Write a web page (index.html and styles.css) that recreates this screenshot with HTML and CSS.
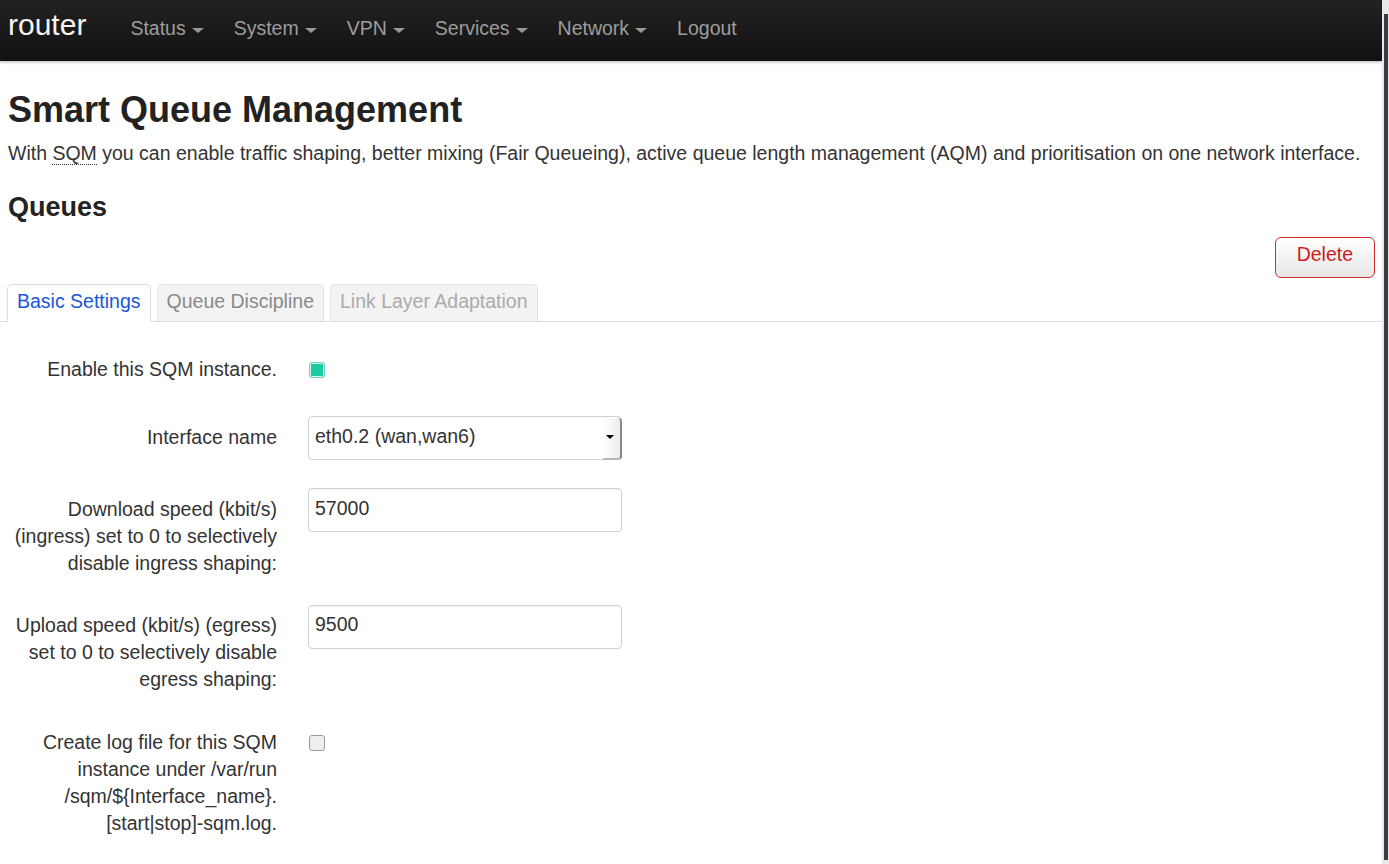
FILE: index.html
```html
<!DOCTYPE html>
<html lang="en">
<head>
<meta charset="utf-8">
<title>Smart Queue Management - router</title>
<link rel="stylesheet" href="styles.css">
</head>
<body>
<header class="navbar">
  <a class="brand" href="#">router</a>
  <ul class="nav">
    <li><a href="#">Status<span class="caret"></span></a></li>
    <li><a href="#">System<span class="caret"></span></a></li>
    <li><a href="#">VPN<span class="caret"></span></a></li>
    <li><a href="#">Services<span class="caret"></span></a></li>
    <li><a href="#">Network<span class="caret"></span></a></li>
    <li><a href="#">Logout</a></li>
  </ul>
</header>
<main class="main">
  <h1 class="page-title">Smart Queue Management</h1>
  <p class="desc">With <abbr class="abbr" title="Smart Queue Management">SQM</abbr> you can enable traffic shaping, better mixing (Fair Queueing), active queue length management (AQM) and prioritisation on one network interface.</p>
  <h2 class="section-title">Queues</h2>
  <div class="actions">
    <button class="btn-delete" type="button">Delete</button>
  </div>
  <ul class="tabs">
    <li class="tab active"><a href="#">Basic Settings</a></li>
    <li class="tab"><a href="#">Queue Discipline</a></li>
    <li class="tab disabled"><a href="#">Link Layer Adaptation</a></li>
  </ul>
  <form class="form">
    <div class="form-row row-check">
      <label class="control-label">Enable this SQM instance.</label>
      <div class="control"><input class="check check-on" type="checkbox" checked></div>
    </div>
    <div class="form-row">
      <label class="control-label">Interface name</label>
      <div class="control">
        <div class="select">
          <select class="select-input">
            <option>eth0.2 (wan,wan6)</option>
          </select>
        </div>
      </div>
    </div>
    <div class="form-row">
      <label class="control-label">Download speed (kbit/s) (ingress) set to 0 to selectively disable ingress shaping:</label>
      <div class="control"><input class="text-input" type="text" value="57000"></div>
    </div>
    <div class="form-row">
      <label class="control-label">Upload speed (kbit/s) (egress) set to 0 to selectively disable egress shaping:</label>
      <div class="control"><input class="text-input" type="text" value="9500"></div>
    </div>
    <div class="form-row row-check">
      <label class="control-label">Create log file for this SQM instance under /var/run<wbr>/sqm/${Interface_name}.<wbr>[start|stop]-sqm.log.</label>
      <div class="control"><input class="check check-off" type="checkbox"></div>
    </div>
  </form>
</main>
</body>
</html>
```
FILE: styles.css
```css
/* page canvas with a slim scrollbar strip on the right */
html {
  overflow: hidden;
  background:
    linear-gradient(#3b3b41, #3b3b41) no-repeat right 1px top 14px / 4px calc(100% - 18px) fixed,
    linear-gradient(to right, #fff calc(100% - 7px), #e8e8e8 calc(100% - 7px)) fixed;
}

body {
  margin: 0 7px 0 0;
  padding-bottom: 20px;
  background: #fff;
  font-family: "Liberation Sans", Arial, Helvetica, sans-serif;
  font-size: 19.5px;
  line-height: 27px;
  color: #333;
}

/* Navbar */
.navbar {
  display: flex;
  align-items: baseline;
  height: 61px;
  box-sizing: border-box;
  padding: 10px 0 0 8px;
  background: linear-gradient(#222, #111);
  box-shadow: 0 1px 3px rgba(0, 0, 0, 0.3);
}
.brand {
  font-size: 30px;
  line-height: 30px;
  color: #f4f4f4;
  text-decoration: none;
  margin-right: 29px;
}
.nav {
  display: flex;
  align-items: baseline;
  list-style: none;
  margin: 0;
  padding: 0;
}
.nav a {
  display: block;
  padding: 0 15px;
  line-height: 27px;
  color: #9d9d9d;
  text-decoration: none;
}
.caret {
  display: inline-block;
  margin-left: 6px;
  vertical-align: 2px;
  border-top: 5px solid #999;
  border-left: 6px solid transparent;
  border-right: 6px solid transparent;
}

/* Headings */
.page-title {
  margin: 22px 0 0;
  padding-left: 8px;
  font-size: 36px;
  line-height: 54px;
  font-weight: bold;
  color: #222;
}
.desc {
  margin: 3px 0 0;
  padding-left: 8px;
}
.abbr {
  text-decoration: none;
  border-bottom: 1px dotted #333;
}
.section-title {
  margin: 20px 0 0;
  padding-left: 8px;
  font-size: 27px;
  line-height: 40px;
  font-weight: bold;
  color: #222;
}

/* Delete button */
.actions {
  display: flex;
  justify-content: flex-end;
  padding-right: 7px;
  margin-top: 10px;
}
.btn-delete {
  font: inherit;
  line-height: 27px;
  color: #d01c1c;
  background: linear-gradient(#fff, #e6e6e6);
  border: 1px solid #d42a2a;
  border-radius: 6px;
  padding: 3px 21px 9px;
}

/* Tabs */
.tabs {
  display: flex;
  gap: 6px;
  list-style: none;
  margin: 6px 0 0;
  padding: 0 0 0 7px;
  border-bottom: 1px solid #ddd;
}
.tab {
  margin-bottom: -1px;
}
.tab a {
  display: block;
  padding: 0 9px 4px;
  line-height: 32px;
  border: 1px solid #e4e4e4;
  border-bottom-color: #ddd;
  border-radius: 5px 5px 0 0;
  background: #f3f3f3;
  color: #8a8a8a;
  text-decoration: none;
}
.tab.active a {
  background: #fff;
  border-color: #ddd #ddd #fff;
  color: #1657d8;
}
.tab.disabled a {
  color: #ababab;
}

/* Form */
.form {
  margin-top: 26px;
}
.form-row {
  display: grid;
  grid-template-columns: 269px 314px;
  column-gap: 31px;
  align-items: start;
  padding-left: 8px;
  margin-bottom: 28px;
}
.row-check {
  min-height: 40px;
}
.control-label {
  text-align: right;
  padding-top: 7.5px;
}
.control {
  display: flex;
}

.check {
  appearance: none;
  -webkit-appearance: none;
  width: 16px;
  height: 16px;
  box-sizing: border-box;
  margin: 14px 0 0 1px;
  border-radius: 3px;
}
.check-on {
  border: 1px solid #6fd8c0;
  background: #1bc9a2;
  box-shadow: inset 0 0 0 1px #d6f6ee;
}
.check-off {
  border: 1px solid #9a9a9a;
  background: #eee;
}

.text-input {
  box-sizing: border-box;
  width: 314px;
  height: 44px;
  margin: 0;
  border: 1px solid #d0d0d0;
  border-radius: 4px;
  padding: 4px 6px 8px;
  font: inherit;
  color: #333;
  box-shadow: inset 0 1px 1px rgba(0, 0, 0, 0.05);
}

.select {
  position: relative;
  width: 314px;
  height: 44px;
}
.select-input {
  appearance: none;
  -webkit-appearance: none;
  box-sizing: border-box;
  width: 100%;
  height: 100%;
  margin: 0;
  border: 1px solid #d0d0d0;
  border-radius: 4px;
  padding: 4px 24px 8px 6px;
  font: inherit;
  color: #333;
  background: #fff;
}
.select::after {
  content: "";
  position: absolute;
  top: 2px;
  right: 0;
  bottom: 0;
  width: 19px;
  box-sizing: border-box;
  border-right: 2px solid #8a8a8a;
  border-bottom: 2px solid #b8b8b8;
  border-radius: 0 4px 4px 0;
  background: linear-gradient(to right, rgba(255, 255, 255, 0), #ececec);
  pointer-events: none;
}
.select::before {
  content: "";
  position: absolute;
  right: 8px;
  top: 19px;
  border-top: 4px solid #000;
  border-left: 4px solid transparent;
  border-right: 4px solid transparent;
  z-index: 1;
  pointer-events: none;
}
```
